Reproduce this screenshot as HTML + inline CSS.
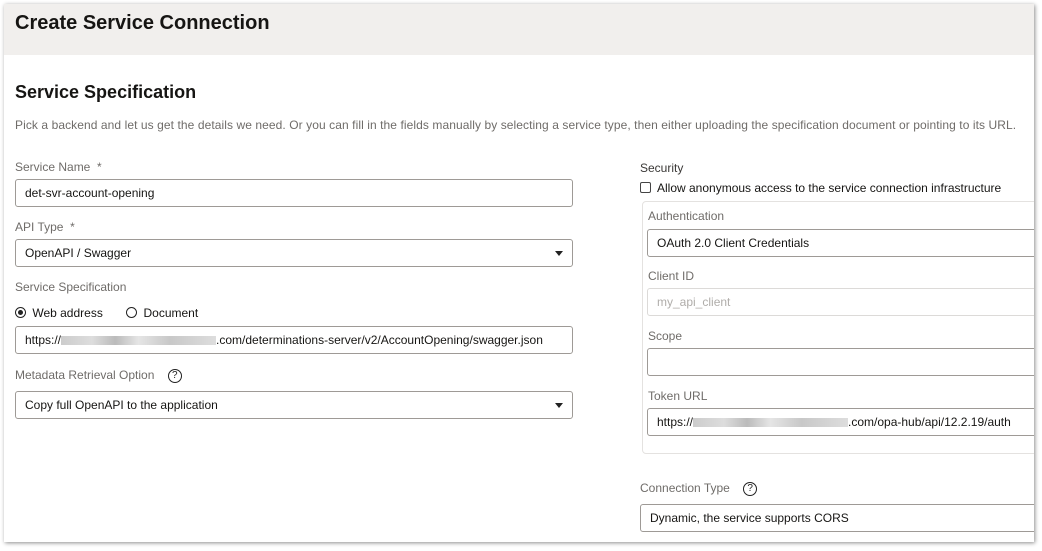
<!DOCTYPE html>
<html><head><style>
*{box-sizing:border-box;margin:0;padding:0}
body{width:1042px;height:551px;background:#fff;font-family:"Liberation Sans",sans-serif;position:relative;overflow:hidden;color:#161513}
.frame{position:absolute;left:4px;top:4px;width:1030px;height:538px;background:#fff;box-shadow:1px 1px 4px rgba(0,0,0,.45);overflow:hidden}
.hdr{position:absolute;left:0;top:0;width:100%;height:51px;background:#f1efed}
.a{position:absolute;white-space:nowrap}
.lbl{font-size:12px;color:#6f6c69}
.in{position:absolute;height:28px;border:1px solid #9e9a96;border-radius:3px;font-size:12px;padding:0 9px;line-height:27px;color:#161513;background:#fff;white-space:nowrap;overflow:hidden}
.blur{display:inline-block;width:155px;height:9px;background:linear-gradient(90deg,#ccc,#ddd 20%,#bbb 35%,#e5e5e5 50%,#c8c8c8 70%,#ddd);vertical-align:middle}
.caret{position:absolute;right:9px;top:11px;width:0;height:0;border-left:4.5px solid transparent;border-right:4.5px solid transparent;border-top:5px solid #222}
.q{display:inline-block;width:14px;height:14px;border:1.3px solid #222;border-radius:50%;font-size:10px;line-height:12px;text-align:center;color:#222;margin-left:10px;vertical-align:middle}
</style></head><body>
<div class="frame">
<div class="hdr"></div>
<div class="a" style="left:11px;top:8px;font-size:20px;font-weight:bold">Create Service Connection</div>
<div class="a" style="left:11px;top:78px;font-size:18px;font-weight:bold">Service Specification</div>
<div class="a" style="left:11px;top:114px;font-size:12px;color:#6f6c69;letter-spacing:0.08px">Pick a backend and let us get the details we need. Or you can fill in the fields manually by selecting a service type, then either uploading the specification document or pointing to its URL.</div>

<div class="a lbl" style="left:11px;top:156px">Service Name &nbsp;*</div>
<div class="in" style="left:11px;top:175px;width:558px">det-svr-account-opening</div>
<div class="a lbl" style="left:11px;top:216px">API Type &nbsp;*</div>
<div class="in" style="left:11px;top:235px;width:558px">OpenAPI / Swagger<span class="caret"></span></div>
<div class="a lbl" style="left:11px;top:276px">Service Specification</div>
<div class="a" style="left:11px;top:302px;font-size:12px">
<span style="display:inline-block;width:11px;height:11px;border:1px solid #222;border-radius:50%;vertical-align:-1px;position:relative;margin-right:3px"><span style="position:absolute;left:2px;top:2px;width:5px;height:5px;border-radius:50%;background:#222"></span></span> Web address
<span style="display:inline-block;width:11px;height:11px;border:1px solid #222;border-radius:50%;vertical-align:-1px;margin-left:20px;margin-right:3px"></span> Document</div>
<div class="in" style="left:11px;top:322px;width:558px">https://<span class="blur"></span>.com/determinations-server/v2/AccountOpening/swagger.json</div>
<div class="a lbl" style="left:11px;top:364px">Metadata Retrieval Option <span class="q">?</span></div>
<div class="in" style="left:11px;top:387px;width:558px">Copy full OpenAPI to the application<span class="caret"></span></div>

<div class="a lbl" style="left:636px;top:157px;color:#3a3836">Security</div>
<div class="a" style="left:636px;top:177px;font-size:12px"><span style="display:inline-block;width:11px;height:11px;border:1.3px solid #444;border-radius:2px;vertical-align:-1px;margin-right:6px"></span>Allow anonymous access to the service connection infrastructure</div>
<div style="position:absolute;left:638px;top:197px;width:420px;height:253px;border:1px solid #e4e2e0;border-radius:4px"></div>
<div class="a lbl" style="left:644px;top:205px">Authentication</div>
<div class="in" style="left:643px;top:225px;width:400px">OAuth 2.0 Client Credentials</div>
<div class="a lbl" style="left:644px;top:265px">Client ID</div>
<div class="in" style="left:643px;top:284px;width:400px;border-color:#dcdad8;color:#b0adaa">my_api_client</div>
<div class="a lbl" style="left:644px;top:325px">Scope</div>
<div class="in" style="left:643px;top:344px;width:400px"></div>
<div class="a lbl" style="left:644px;top:385px">Token URL</div>
<div class="in" style="left:643px;top:404px;width:400px">https://<span class="blur"></span>.com/opa-hub/api/12.2.19/auth</div>
<div class="a lbl" style="left:636px;top:477px">Connection Type <span class="q">?</span></div>
<div class="in" style="left:636px;top:500px;width:410px">Dynamic, the service supports CORS</div>
</div>
</body></html>
